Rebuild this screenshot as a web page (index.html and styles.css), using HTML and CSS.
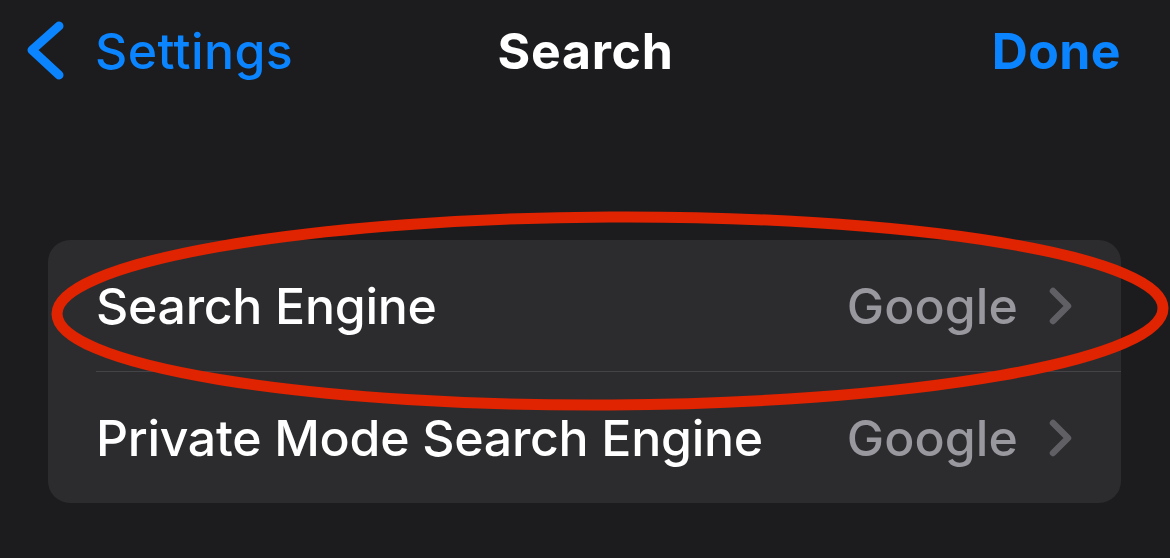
FILE: index.html
```html
<!DOCTYPE html>
<html>
<head>
<meta charset="utf-8">
<link rel="stylesheet" href="styles.css">
</head>
<body>
<div class="page">
  <header class="nav">
    <div class="nav-left">
      <svg class="back-chev" width="40" height="62" viewBox="0 0 40 62">
        <polyline points="32,6 5,30 32,55" fill="none" stroke="#0a84ff" stroke-width="9" stroke-linecap="round" stroke-linejoin="round"/>
      </svg>
      <span class="back-label">Settings</span>
    </div>
    <div class="nav-title">Search</div>
    <div class="nav-right"><span class="done">Done</span></div>
  </header>
  <main class="content">
    <section class="card">
      <div class="row">
        <span class="row-label">Search Engine</span>
        <span class="row-value">Google</span>
        <svg class="row-chev" width="26" height="40" viewBox="0 0 26 40">
          <polyline points="5,5 20,20 5,35" fill="none" stroke="#5f5f64" stroke-width="6.5" stroke-linecap="round" stroke-linejoin="round"/>
        </svg>
      </div>
      <div class="sep"></div>
      <div class="row">
        <span class="row-label">Private Mode Search Engine</span>
        <span class="row-value">Google</span>
        <svg class="row-chev" width="26" height="40" viewBox="0 0 26 40">
          <polyline points="5,5 20,20 5,35" fill="none" stroke="#5f5f64" stroke-width="6.5" stroke-linecap="round" stroke-linejoin="round"/>
        </svg>
      </div>
    </section>
  </main>
  <svg class="annotation" width="1170" height="558" viewBox="0 0 1170 558">
    <ellipse cx="610" cy="311" rx="553" ry="94" fill="none" stroke="#e02300" stroke-width="11" transform="rotate(-0.3 610 311)"/>
  </svg>
</div>
</body>
</html>
```
FILE: styles.css
```css
html, body {
  margin: 0;
  padding: 0;
  background: #1c1c1e;
}
body {
  font-family: Inter, "Noto Sans", sans-serif;
  color: #ffffff;
  width: 1170px;
  height: 558px;
  overflow: hidden;
}
.page {
  position: relative;
  width: 1170px;
  height: 558px;
}
.nav {
  display: grid;
  grid-template-columns: 1fr auto 1fr;
  align-items: center;
  height: 102px;
  padding: 0 49px 0 50px;
}
.nav-left {
  display: flex;
  align-items: center;
  gap: 28px;
  margin-left: -23px;
}
.back-chev {
  display: block;
}
.back-label {
  color: #0a84ff;
  font-size: 50px;
  font-weight: 500;
  letter-spacing: 0.4px;
}
.nav-title {
  font-size: 50px;
  font-weight: 700;
  letter-spacing: 0.7px;
}
.nav-right {
  display: flex;
  justify-content: flex-end;
}
.done {
  color: #0a84ff;
  font-size: 50px;
  font-weight: 700;
  letter-spacing: 0.4px;
}
.content {
  padding: 138px 49px 0 48px;
}
.card {
  background: #2c2c2e;
  border-radius: 22px;
  overflow: hidden;
}
.row {
  display: flex;
  align-items: center;
  height: 131px;
  padding: 0 47px 0 48px;
}
.row-label {
  flex: 1;
  font-size: 50px;
  font-weight: 500;
  letter-spacing: -0.3px;
}
.row-value {
  color: #98989e;
  font-size: 50px;
  font-weight: 500;
  letter-spacing: 0.1px;
  margin-right: 30px;
}
.row-chev {
  display: block;
}
.sep {
  height: 1px;
  margin-left: 48px;
  background: #444448;
}
.annotation {
  position: absolute;
  left: 0;
  top: 0;
  pointer-events: none;
}
```
